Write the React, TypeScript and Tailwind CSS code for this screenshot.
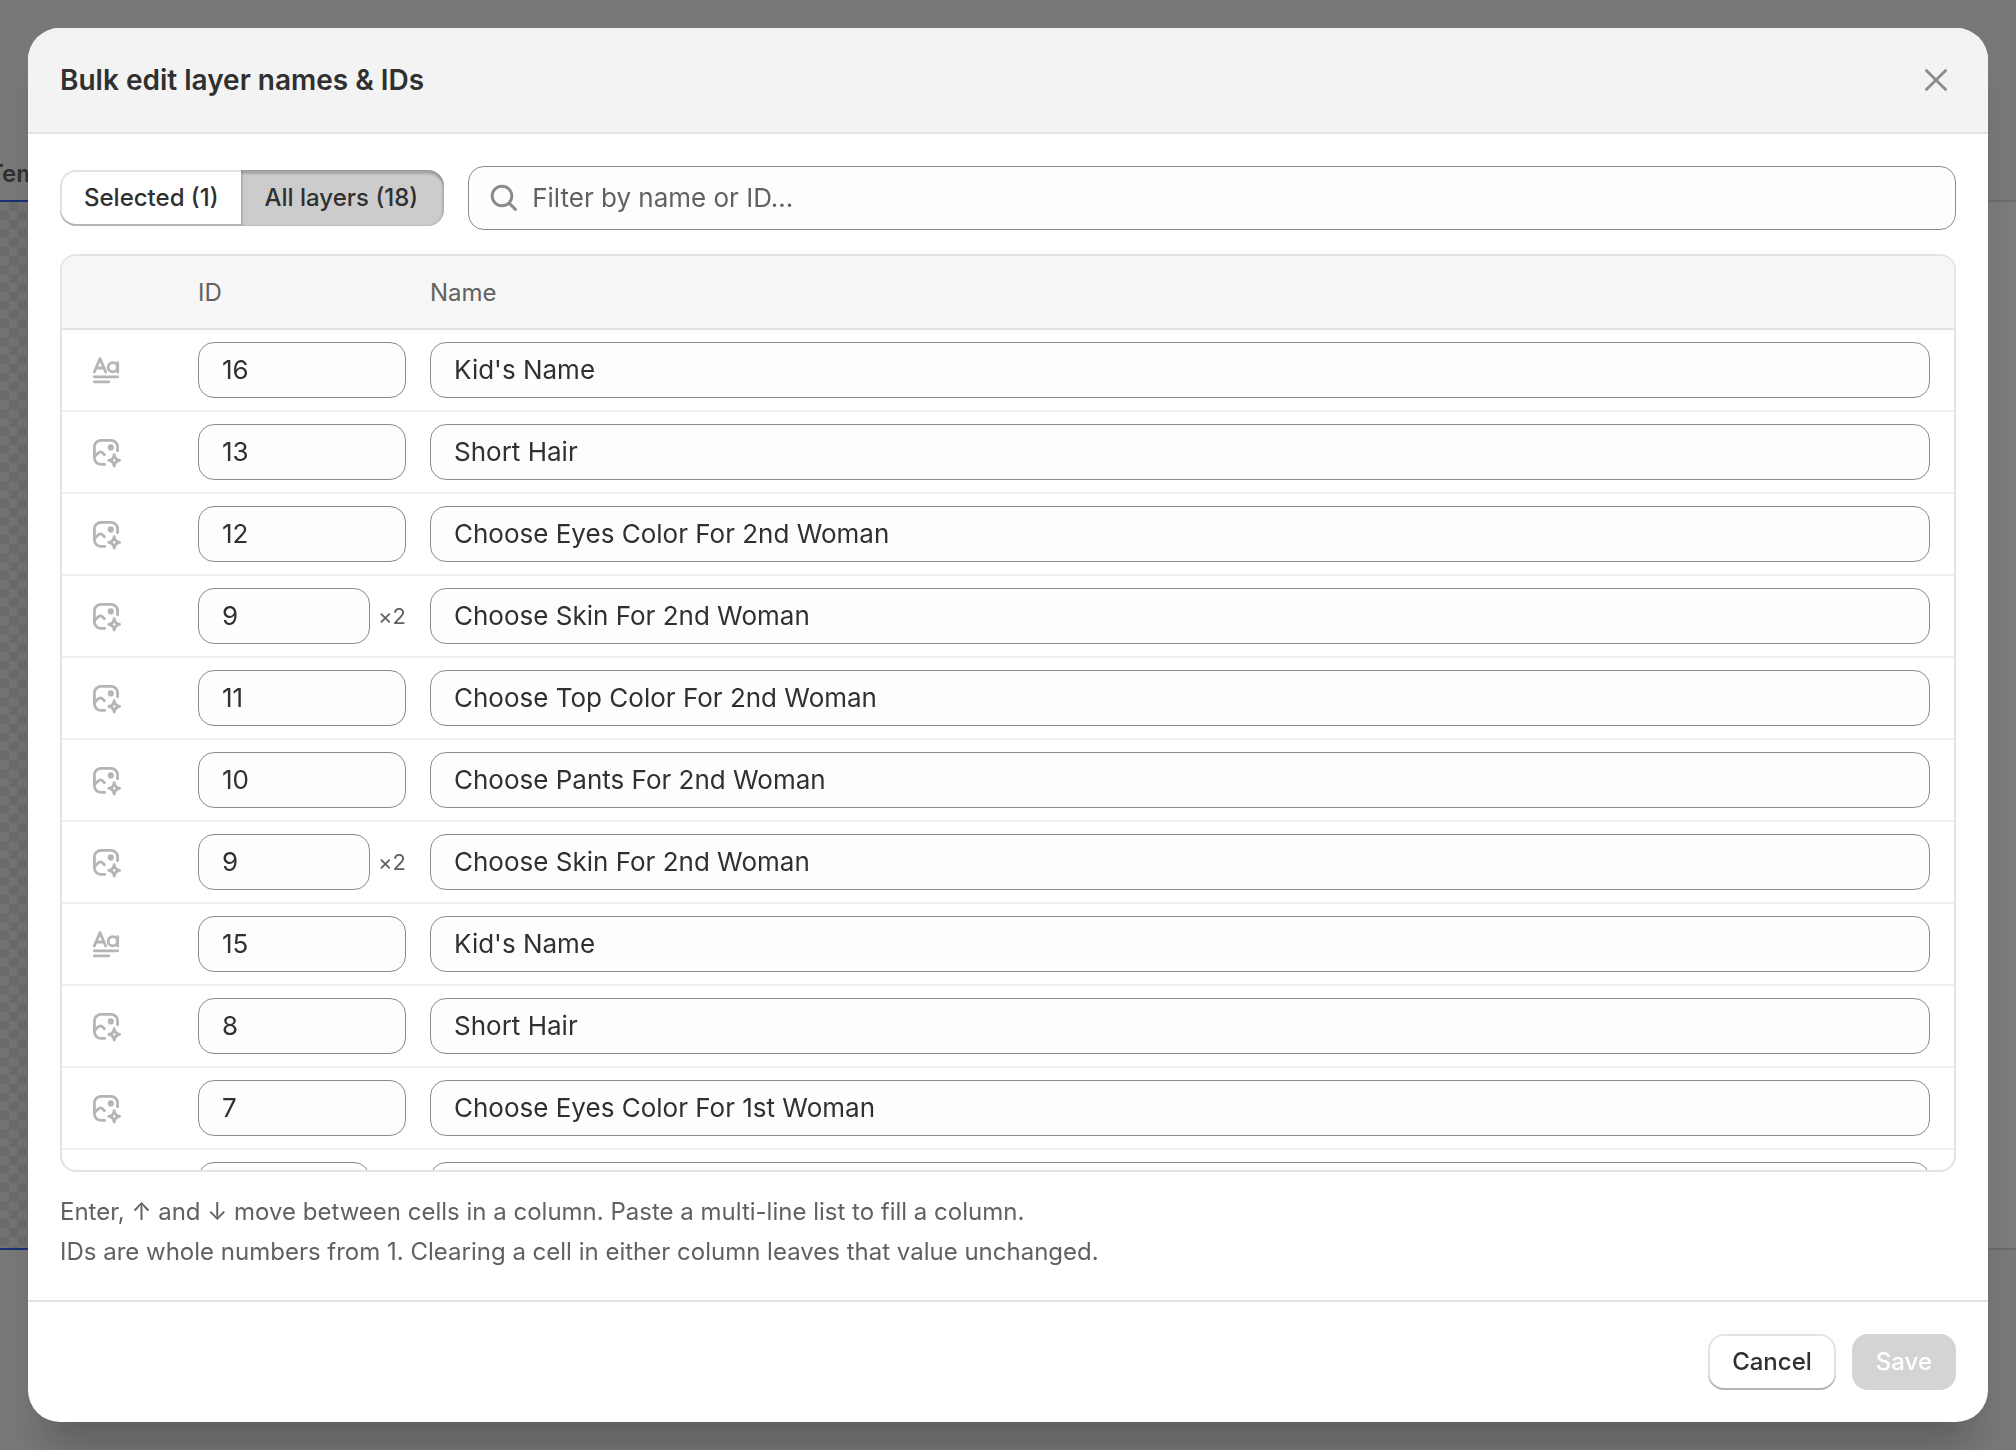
import { useState } from "react";

type Layer = { key: number; kind: "text" | "image"; id: string; name: string; dup?: number };

const initialLayers: Layer[] = [
  { key: 1, kind: "text", id: "16", name: "Kid's Name" },
  { key: 2, kind: "image", id: "13", name: "Short Hair" },
  { key: 3, kind: "image", id: "12", name: "Choose Eyes Color For 2nd Woman" },
  { key: 4, kind: "image", id: "9", name: "Choose Skin For 2nd Woman", dup: 2 },
  { key: 5, kind: "image", id: "11", name: "Choose Top Color For 2nd Woman" },
  { key: 6, kind: "image", id: "10", name: "Choose Pants For 2nd Woman" },
  { key: 7, kind: "image", id: "9", name: "Choose Skin For 2nd Woman", dup: 2 },
  { key: 8, kind: "text", id: "15", name: "Kid's Name" },
  { key: 9, kind: "image", id: "8", name: "Short Hair" },
  { key: 10, kind: "image", id: "7", name: "Choose Eyes Color For 1st Woman" },
  { key: 11, kind: "image", id: "4", name: "Choose Skin For 1st Woman", dup: 2 },
];

const inputClass =
  "h-14 min-w-0 rounded-2xl border border-[#8a8a8a] bg-[#fdfdfd] px-[23px] pb-0.5 text-[26px] leading-10 text-[#303030] outline-none focus:border-[#005bd3]";

const headClass = "sticky top-0 z-10 border-b-2 border-[#e3e3e3] bg-[#f7f7f7] pt-[21px] pb-[19px] font-normal";

const secondaryShadow = "shadow-[inset_0_-2px_0_#b5b5b5,inset_0_0_0_2px_#e3e3e3]";

function TextLayerIcon() {
  return (
    <svg viewBox="0 0 28 28" className="size-7" fill="none" stroke="#b5b5b5" strokeWidth="2.8" strokeLinecap="round" strokeLinejoin="round" aria-hidden="true">
      <path d="M2.3 16 L8 2.6 L13.7 16 M4.6 12 H11.4" />
      <circle cx="20.8" cy="11.3" r="4.6" />
      <path d="M25.7 6.6 V16" />
      <path d="M2.3 20.8 H25.7 M2.3 25.8 H16.8" />
    </svg>
  );
}

function ImageLayerIcon() {
  return (
    <svg viewBox="0 0 28 28" className="size-7 overflow-visible" fill="none" stroke="#b5b5b5" strokeWidth="2.8" strokeLinecap="round" strokeLinejoin="round" aria-hidden="true">
      <path d="M12.8 26.4 H9 A6.6 6.6 0 0 1 2.4 19.8 V9 A6.6 6.6 0 0 1 9 2.4 H19 A6.6 6.6 0 0 1 25.6 9 V12.8" />
      <path d="M2.8 18.2 L6.6 14.6 Q8.4 13.2 10.2 14.6 L12.4 16.8" />
      <circle cx="18.8" cy="9.4" r="3.1" fill="#b5b5b5" stroke="none" />
      <path d="M22.2 16.6 Q22.8 21.6 27.6 22.4 Q22.8 23.2 22.2 28 Q21.6 23.2 16.8 22.4 Q21.6 21.6 22.2 16.6 Z" />
    </svg>
  );
}

// The editor that stays visible around the modal edges
function EditorBackground() {
  return (
    <div className="flex h-full flex-col bg-[#f1f1f1]" aria-hidden="true">
      <div className="flex h-[200px] items-end pb-2.5 text-2xl leading-8 font-semibold text-[#616161]">
        <span className="-ml-3">Template</span>
      </div>
      <div className="flex flex-1 bg-[#f6f6f8]">
        <div className="w-1/4 border-y-2 border-[#2f62e8] bg-[conic-gradient(#d6d6d6_25%,#e6e6e6_0_50%,#d6d6d6_0_75%,#e6e6e6_0)] bg-[length:18px_18px]" />
        <div className="flex-1 border-y-2 border-[#d4d4d4]" />
      </div>
      <div className="h-[200px]" />
    </div>
  );
}

export default function App() {
  const [layers, setLayers] = useState(initialLayers);
  const [scope, setScope] = useState("all");
  const [filter, setFilter] = useState("");

  const updateLayer = (key: number, patch: Partial<Layer>) => {
    setLayers(layers.map((l) => (l.key === key ? { ...l, ...patch } : l)));
  };

  const visible = layers.filter(
    (l) => l.name.toLowerCase().includes(filter.toLowerCase()) || l.id.includes(filter)
  );

  const segment = (value: string) =>
    scope === value
      ? "relative bg-[#cccccc] shadow-[inset_-2px_0_2px_rgba(26,26,26,0.12),inset_2px_0_2px_rgba(26,26,26,0.12),inset_0_4px_2px_rgba(26,26,26,0.2)]"
      : `bg-white ${secondaryShadow}`;

  return (
    <div className="h-screen overflow-hidden font-['Inter',sans-serif] text-[#303030]">
      <EditorBackground />

      {/* Backdrop */}
      <div className="fixed inset-0 flex bg-black/50 p-7">
        <div
          role="dialog"
          aria-labelledby="bulk-edit-title"
          className="flex min-w-0 flex-1 flex-col overflow-hidden rounded-[32px] bg-white shadow-[0_40px_40px_-16px_rgba(26,26,26,0.28)]"
        >
          <header className="flex items-center justify-between border-b-2 border-[#e3e3e3] bg-[#f3f3f3] px-8 py-8">
            <h2 id="bulk-edit-title" className="text-[28px] leading-10 font-semibold">
              Bulk edit layer names &amp; IDs
            </h2>
            <button type="button" aria-label="Close" className="flex size-10 items-center justify-center">
              <svg viewBox="0 0 24 24" className="size-6" fill="none" stroke="#8a8a8a" strokeWidth="2.8" strokeLinecap="round" aria-hidden="true">
                <path d="M2.4 2.4 L21.6 21.6 M21.6 2.4 L2.4 21.6" />
              </svg>
            </button>
          </header>

          <div className="flex min-h-0 flex-1 flex-col px-8 pt-8 pb-7">
            {/* Scope switch and filter */}
            <div className="flex items-center gap-6">
              <div className="flex text-2xl leading-8 font-[550]">
                <button
                  type="button"
                  onClick={() => setScope("selected")}
                  className={`h-14 rounded-l-2xl px-6 ${segment("selected")}`}
                >
                  Selected (1)
                </button>
                <button
                  type="button"
                  onClick={() => setScope("all")}
                  className={`-ml-0.5 h-14 rounded-r-2xl pr-[26px] pl-6 ${segment("all")}`}
                >
                  All layers (18)
                </button>
              </div>
              <label className="flex h-16 flex-1 items-center gap-3 rounded-2xl border border-[#8a8a8a] bg-[#fdfdfd] px-[19px]">
                <svg viewBox="0 0 32 32" className="size-8" fill="none" stroke="#8a8a8a" strokeWidth="2.9" strokeLinecap="round" aria-hidden="true">
                  <circle cx="14" cy="14" r="9.8" />
                  <path d="M21.4 21.4 L27.4 27.4" />
                </svg>
                <input
                  type="text"
                  aria-label="Filter by name or ID"
                  placeholder="Filter by name or ID..."
                  value={filter}
                  onChange={(e) => setFilter(e.target.value)}
                  className="min-w-0 flex-1 bg-transparent text-[26px] leading-10 outline-none placeholder:text-[#616161]"
                />
              </label>
            </div>

            {/* Layers */}
            <div className="mt-6 min-h-0 flex-1 overflow-y-auto rounded-2xl border-2 border-[#e3e3e3] [scrollbar-width:none]">
              <table className="w-full table-fixed border-separate border-spacing-0">
                <thead>
                  <tr className="text-left text-2xl leading-8 text-[#616161]">
                    <th scope="col" aria-label="Type" className={`w-[136px] ${headClass}`} />
                    <th scope="col" className={`w-[232px] ${headClass}`}>ID</th>
                    <th scope="col" className={headClass}>Name</th>
                  </tr>
                </thead>
                <tbody>
                  {visible.map((layer) => (
                    <tr key={layer.key}>
                      <td className="border-b-2 border-[#f1f1f1] pl-[30px]">
                        {layer.kind === "text" ? <TextLayerIcon /> : <ImageLayerIcon />}
                      </td>
                      <td className="border-b-2 border-[#f1f1f1] py-3 pr-6">
                        <div className="flex items-center gap-2">
                          <input
                            type="text"
                            aria-label={`ID of ${layer.name}`}
                            value={layer.id}
                            onChange={(e) => updateLayer(layer.key, { id: e.target.value })}
                            className={`flex-1 ${inputClass}`}
                          />
                          {layer.dup && (
                            <span className="text-[22px] leading-8 text-[#616161] [font-feature-settings:'calt'_0]">
                              ×{layer.dup}
                            </span>
                          )}
                        </div>
                      </td>
                      <td className="border-b-2 border-[#f1f1f1] py-3 pr-6">
                        <div className="flex">
                          <input
                            type="text"
                            aria-label={`Name of layer ${layer.id}`}
                            value={layer.name}
                            onChange={(e) => updateLayer(layer.key, { name: e.target.value })}
                            className={`flex-1 ${inputClass}`}
                          />
                        </div>
                      </td>
                    </tr>
                  ))}
                </tbody>
              </table>
            </div>

            <div className="mt-5 text-2xl leading-10 text-[#616161]">
              <p>Enter, ↑ and ↓ move between cells in a column. Paste a multi-line list to fill a column.</p>
              <p>IDs are whole numbers from 1. Clearing a cell in either column leaves that value unchanged.</p>
            </div>
          </div>

          <footer className="flex justify-end gap-4 border-t-2 border-[#e3e3e3] p-8 text-2xl leading-8 font-[550]">
            <button type="button" className={`h-14 rounded-2xl bg-white px-6 ${secondaryShadow}`}>
              Cancel
            </button>
            <button type="button" disabled className="h-14 rounded-2xl bg-[#d4d4d4] px-6 text-white">
              Save
            </button>
          </footer>
        </div>
      </div>
    </div>
  );
}
